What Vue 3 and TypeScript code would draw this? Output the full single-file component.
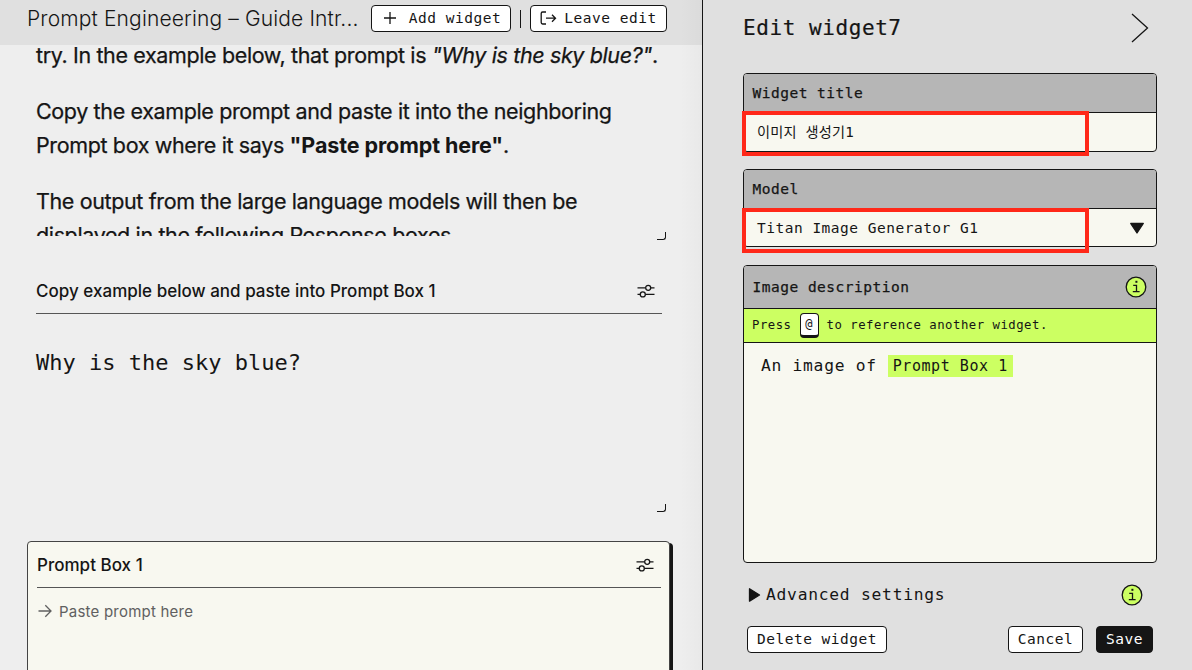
<script setup lang="ts">
interface Settings {
  title: string
  model: string
  reference: string
}

const settings: Settings = {
  title: '이미지 생성기1',
  model: 'Titan Image Generator G1',
  reference: 'Prompt Box 1',
}
</script>

<template>
  <div class="app">
    <main class="board">
      <header class="topbar">
        <h1 class="app-title">Prompt Engineering – Guide Intr...</h1>
        <button class="btn add">
          <svg width="14" height="14" viewBox="0 0 14 14"><path d="M7 1v12M1 7h12" /></svg>
          <span>Add widget</span>
        </button>
        <i class="divider"></i>
        <button class="btn leave">
          <svg width="17" height="14" viewBox="0 0 17 14">
            <path d="M6 1H2.6Q1.2 1 1.2 2.4v9.2Q1.2 13 2.6 13H6M6 7.2h9.5M12 3.7l3.5 3.5-3.5 3.5" />
          </svg>
          <span>Leave edit</span>
        </button>
      </header>

      <section class="intro">
        <p>try. In the example below, that prompt is <em>"Why is the sky blue?"</em>.</p>
        <p>
          Copy the example prompt and paste it into the neighboring<br />
          Prompt box where it says <strong>"Paste prompt here"</strong>.
        </p>
        <p>
          The output from the large language models will then be<br />
          displayed in the following Response boxes.
        </p>
      </section>
      <i class="grip"></i>

      <section class="example">
        <div class="widget-head">
          <h2>Copy example below and paste into Prompt Box 1</h2>
          <svg class="sliders" width="18" height="14" viewBox="0 0 18 14">
            <path d="M.5 3.8h8M13.8 3.8h3.7M.5 10.4h2.7M8.5 10.4h9" />
            <circle cx="11.2" cy="3.8" r="2.5" /><circle cx="5.8" cy="10.4" r="2.5" />
          </svg>
        </div>
        <p class="sample">Why is the sky blue?</p>
      </section>
      <i class="grip second"></i>

      <section class="prompt-card">
        <div class="widget-head card-head">
          <h2>Prompt Box 1</h2>
          <svg class="sliders" width="18" height="14" viewBox="0 0 18 14">
            <path d="M.5 3.8h8M13.8 3.8h3.7M.5 10.4h2.7M8.5 10.4h9" />
            <circle cx="11.2" cy="3.8" r="2.5" /><circle cx="5.8" cy="10.4" r="2.5" />
          </svg>
        </div>
        <p class="hint">
          <svg width="14" height="14" viewBox="0 0 14 14"><path d="M.5 7h12.5M7.3 1.2L13 7l-5.7 5.8" /></svg>
          <span>Paste prompt here</span>
        </p>
      </section>
      <div class="edge-shade"></div>
    </main>

    <aside class="panel">
      <header class="panel-head">
        <h2>Edit widget7</h2>
        <svg width="18" height="30" viewBox="0 0 18 30"><path d="M1 1l15.5 14L1 29" /></svg>
      </header>

      <div class="field title-field">
        <div class="label">Widget title</div>
        <div class="value korean">{{ settings.title }}</div>
        <i class="mark"></i>
      </div>

      <div class="field model-field">
        <div class="label">Model</div>
        <div class="value">
          <span>{{ settings.model }}</span>
          <svg width="16" height="13" viewBox="0 0 16 13">
            <path class="solid" d="M1.7 1.5h12.6L8 11z" />
          </svg>
        </div>
        <i class="mark"></i>
      </div>

      <div class="field desc-field">
        <div class="label">
          <span>Image description</span>
          <svg class="info" width="22" height="22" viewBox="0 0 22 22">
            <circle cx="11" cy="11" r="9.8" />
            <path d="M8.2 9.4h3.3v6.2M7.8 15.7h6.8" />
            <path class="dot" d="M10.4 4.8h2v2h-2z" />
          </svg>
        </div>
        <div class="press"><span>Press</span><kbd>@</kbd><span>to reference another widget.</span></div>
        <div class="editor"><span>An image of</span><mark>{{ settings.reference }}</mark></div>
      </div>

      <div class="advanced">
        <svg width="13" height="16" viewBox="0 0 13 16"><path class="solid" d="M1.5 1.8v12.4L11.5 8z" /></svg>
        <span>Advanced settings</span>
        <svg class="info" width="22" height="22" viewBox="0 0 22 22">
          <circle cx="11" cy="11" r="9.8" />
          <path d="M8.2 9.4h3.3v6.2M7.8 15.7h6.8" />
          <path class="dot" d="M10.4 4.8h2v2h-2z" />
        </svg>
      </div>

      <footer class="actions">
        <button class="btn delete">Delete widget</button>
        <button class="btn cancel">Cancel</button>
        <button class="btn save">Save</button>
      </footer>
    </aside>
  </div>
</template>

<style>
body { margin: 0; overflow: hidden; }
</style>

<style scoped>
.app {
  --mono: "DejaVu Sans Mono", "Noto Sans CJK KR", monospace;
  --ink: #151515;
  --cream: #f8f8f0;
  --lime: #ccff62;
  display: flex;
  width: 1192px;
  height: 670px;
  overflow: hidden;
  color: var(--ink);
  font-family: Inter, sans-serif;
}
.app * { box-sizing: border-box; }
h1, h2, p { margin: 0; font-weight: 400; }
svg { flex: none; fill: none; stroke: var(--ink); stroke-width: 1.3; }
.solid { fill: var(--ink); stroke: var(--ink); stroke-linejoin: round; }

.board {
  position: relative;
  display: flex;
  flex-direction: column;
  width: 702px;
  height: 670px;
  overflow: hidden;
  background: #eee;
}
.edge-shade {
  position: absolute;
  top: 0;
  right: 0;
  z-index: 2;
  width: 22px;
  height: 100%;
  background: linear-gradient(to right, transparent, rgba(0, 0, 0, .022));
}
.topbar {
  z-index: 1;
  display: flex;
  flex: none;
  align-items: flex-start;
  height: 45px;
  padding: 5px 0 0 27px;
  background: #e0e0e0;
}
.app-title {
  width: 344px;
  line-height: 27px;
  font-size: 21px;
  font-weight: 300;
  letter-spacing: .14px;
  white-space: nowrap;
}
.btn {
  display: flex;
  flex: none;
  align-items: center;
  justify-content: center;
  height: 27px;
  padding: 0 0 1px;
  border: 1px solid var(--ink);
  border-radius: 4px;
  background: #fff;
  color: var(--ink);
  font: 14.5px var(--mono);
  letter-spacing: .5px;
  white-space: nowrap;
}
.add { width: 140px; padding-left: 2px; gap: 12px; }
.leave { width: 137px; gap: 7px; }
.divider { width: 1px; height: 18px; margin: 5px 9px 0; background: var(--ink); }

.intro {
  flex: none;
  height: 198px;
  margin-top: -7px;
  padding-left: 36px;
  overflow: hidden;
  font-size: 21.5px;
  line-height: 34px;
  letter-spacing: -.37px;
  white-space: nowrap;
  -webkit-text-stroke: .25px var(--ink);
}
.intro p { margin-bottom: 22px; }
strong { font-weight: 700; letter-spacing: -.1px; -webkit-text-stroke: 0; }

.grip {
  flex: none;
  width: 9px;
  height: 8px;
  margin: -4px 0 0 657px;
  border: solid var(--ink);
  border-width: 0 1.5px 1.5px 0;
  border-bottom-right-radius: 3px;
}
.grip.second { margin-top: 0; }
.example {
  flex: none;
  width: 626px;
  height: 264px;
  margin-left: 36px;
  padding-top: 29px;
}
.widget-head {
  display: flex;
  align-items: center;
  justify-content: space-between;
  height: 45px;
  padding-right: 7px;
  border-bottom: 1px solid #555;
}
.widget-head h2 { font-size: 17px; font-weight: 500; letter-spacing: .02px; }
.sample { margin-top: 35px; font: 22px/28px var(--mono); }
.prompt-card {
  flex: none;
  width: 643px;
  height: 150px;
  margin: 29px 0 0 27px;
  padding: 0 8px 0 9px;
  border: 1px solid #444;
  border-radius: 4px;
  background: var(--cream);
  box-shadow: 3px 2px 0 var(--ink);
}
.card-head { height: 46px; }
.hint {
  display: flex;
  align-items: center;
  gap: 7px;
  height: 20px;
  margin: 13px 0 0 1px;
  color: #606060;
  font-size: 15px;
  letter-spacing: .22px;
}
.hint svg { stroke: #606060; }

.panel {
  width: 490px;
  height: 670px;
  padding: 0 35px 0 40px;
  border-left: 1px solid var(--ink);
  background: #e0e0e0;
  font-family: var(--mono);
}
.panel-head {
  display: flex;
  align-items: center;
  justify-content: space-between;
  height: 73px;
  padding: 0 8px 17px 0;
}
.panel-head h2 { font-size: 21px; letter-spacing: .57px; -webkit-text-stroke: .2px var(--ink); }
.field {
  position: relative;
  width: 414px;
  border: 1px solid var(--ink);
  border-radius: 4px;
  background: var(--cream);
  font-size: 14.5px;
  letter-spacing: .5px;
}
.title-field { height: 79px; }
.model-field { height: 78px; margin-top: 17px; }
.desc-field { height: 298px; margin-top: 18px; }
.label {
  display: flex;
  align-items: center;
  justify-content: space-between;
  height: 39px;
  padding: 0 9px 0 8.5px;
  border-bottom: 1px solid var(--ink);
  border-radius: 3px 3px 0 0;
  background: #b6b6b6;
  -webkit-text-stroke: .25px var(--ink);
}
.value {
  display: flex;
  align-items: center;
  justify-content: space-between;
  height: 38px;
  padding: 0 11px 0 13px;
}
.korean { padding-bottom: 2px; font-size: 14.2px; letter-spacing: .2px; }
.mark {
  position: absolute;
  top: 37px;
  left: -2px;
  width: 347px;
  height: 45px;
  border: 4px solid #ff2819;
}
.model-field .mark { top: 38px; }
.desc-field .label { height: 43px; }
.info circle { fill: var(--lime); }
.info .dot { fill: var(--ink); stroke: none; }
.press {
  display: flex;
  align-items: center;
  height: 34px;
  padding: 0 8px 2px;
  border-bottom: 1px solid var(--ink);
  background: var(--lime);
  font-size: 12.3px;
  letter-spacing: .5px;
}
kbd {
  width: 19px;
  height: 25px;
  margin: 2px 8px 0;
  border: 1px solid var(--ink);
  border-bottom-width: 3px;
  border-radius: 4px;
  background: #fff;
  font: 12px/21px var(--mono);
  text-align: center;
}
.editor { display: flex; align-items: center; margin: 12px 0 0 17px; font-size: 16.3px; letter-spacing: .72px; }
.editor span { margin-top: -2px; }
mark {
  height: 22px;
  margin-left: 11px;
  padding: 0 5px;
  background: var(--lime);
  color: var(--ink);
  font-size: 15px;
  line-height: 23px;
  letter-spacing: .55px;
}
.advanced {
  display: flex;
  align-items: center;
  height: 24px;
  margin-top: 20px;
  padding: 0 14px 0 5px;
  font-size: 16.3px;
  letter-spacing: .75px;
}
.advanced > span { margin: -2px 0 0 5px; }
.advanced .info { margin-left: auto; }
.actions { display: flex; margin: 19px 0 0 4px; }
.delete { width: 140px; }
.cancel { width: 75px; margin-left: 121px; }
.save { width: 57px; margin-left: 13px; background: var(--ink); color: #fff; }
</style>
